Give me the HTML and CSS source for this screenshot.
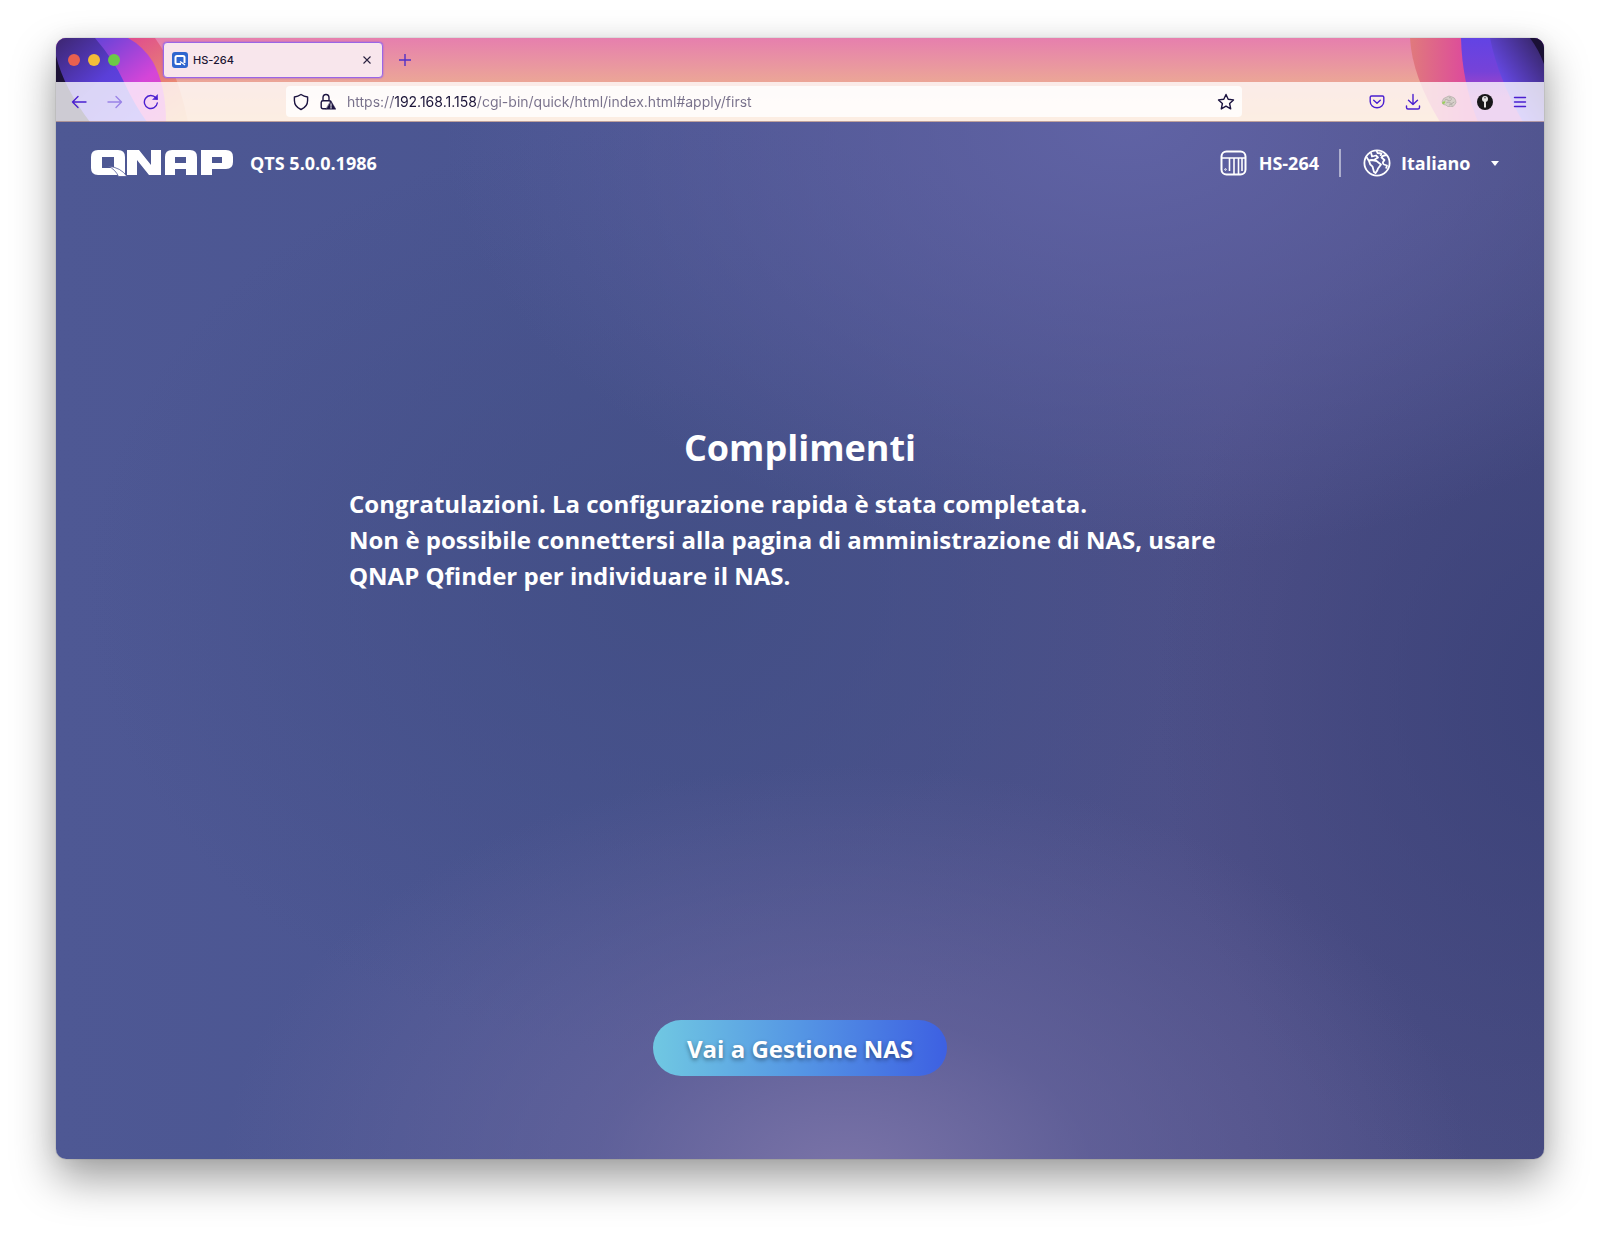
FILE: index.html
```html
<!DOCTYPE html>
<html lang="it">
<head>
<meta charset="utf-8">
<meta name="viewport" content="width=device-width, initial-scale=1">
<title>HS-264</title>
<link rel="stylesheet" href="styles.css">
</head>
<body>
<div class="window">
  <div class="chrome">
    <svg class="theme theme-left" width="134" height="84" viewBox="0 0 134 84" aria-hidden="true">
      <defs>
        <linearGradient id="l1" x1="0" y1="0" x2="1" y2="1"><stop offset="0" stop-color="#3d2670"/><stop offset=".5" stop-color="#5a3fd8"/><stop offset="1" stop-color="#6b4bf0"/></linearGradient>
        <linearGradient id="l2" x1="0" y1="0" x2="1" y2="1"><stop offset=".2" stop-color="#6a43d8"/><stop offset=".65" stop-color="#d545d8"/><stop offset="1" stop-color="#e24fb4"/></linearGradient>
        <linearGradient id="l3" x1="0" y1="0" x2="1" y2="1"><stop offset=".3" stop-color="#e0508c"/><stop offset=".6" stop-color="#e77a78"/><stop offset="1" stop-color="#efa868"/></linearGradient>
      </defs>
      <path d="M0 0H99Q121 30 132 84H0Z" fill="url(#l3)"/>
      <path d="M0 0H72Q87 8 97 24Q110 48 110 84H0Z" fill="url(#l2)"/>
      <path d="M0 0H39Q58 22 68 44T91 84H0Z" fill="url(#l1)"/>
      <path d="M0 18Q8 50 34 84H0Z" fill="#1c1236"/>
    </svg>
    <svg class="theme theme-right" width="150" height="84" viewBox="0 0 150 84" aria-hidden="true">
      <defs>
        <linearGradient id="r1"><stop offset="0" stop-color="#e07a7c"/><stop offset=".42" stop-color="#dd4a9c"/></linearGradient>
        <linearGradient id="r2" x1="0" y1="0" x2="0" y2="1"><stop offset="0" stop-color="#6243e4"/><stop offset=".4" stop-color="#7642d8"/><stop offset=".7" stop-color="#b044c4"/></linearGradient>
        <linearGradient id="r3" x1="0" y1="1" x2="1" y2="0"><stop offset=".3" stop-color="#6a4cf0"/><stop offset=".9" stop-color="#3a2870"/></linearGradient>
      </defs>
      <path d="M16 0Q18 38 46 84H150V0Z" fill="url(#r1)"/>
      <path d="M67 0Q68 44 84 84H150V0Z" fill="url(#r2)"/>
      <path d="M96 0Q104 40 129 84H150V0Z" fill="url(#r3)"/>
      <path d="M136 0Q145 12 150 26V0Z" fill="#1a1034"/>
    </svg>

    <div class="tabstrip">
      <div class="lights"><span class="light red"></span><span class="light yellow"></span><span class="light green"></span></div>
      <div class="tab">
        <svg width="16" height="16" viewBox="0 0 16 16" aria-hidden="true"><rect width="16" height="16" rx="3" fill="#2f66cf"/><path d="M9 12H5Q3.500 12 3.500 10.500V5.500Q3.500 4 5 4H11Q12.500 4 12.500 5.500V11" fill="none" stroke="#fff" stroke-width="2"/><path d="M8 9.500 13 13" stroke="#fff" stroke-width="1.500"/></svg>
        <span class="tab-title">HS-264</span>
        <button class="icon-btn tab-close" aria-label="Chiudi scheda"><svg width="10" height="10" viewBox="0 0 10 10"><path d="M1.500 1.500 8.500 8.500M8.500 1.500 1.500 8.500" stroke="#2a2140" stroke-width="1.100"/></svg></button>
      </div>
      <button class="icon-btn new-tab" aria-label="Nuova scheda"><svg width="14" height="14" viewBox="0 0 14 14"><path d="M7 1V13M1 7H13" stroke="#5030c8" stroke-width="1.400"/></svg></button>
    </div>

    <div class="toolbar">
      <div class="nav">
        <button class="icon-btn" aria-label="Indietro"><svg width="16" height="16" viewBox="0 0 16 16" class="line"><path d="M15 8H1.500M7 2.500 1.500 8 7 13.500"/></svg></button>
        <button class="icon-btn" aria-label="Avanti" disabled><svg width="16" height="16" viewBox="0 0 16 16" class="line"><path d="M1 8H14.500M9 2.500 14.500 8 9 13.500"/></svg></button>
        <button class="icon-btn" aria-label="Ricarica"><svg width="16" height="16" viewBox="0 0 16 16" class="line"><path d="M14.300 9A6.500 6.500 0 1 1 12.800 3.800L14 5"/><path d="M14.500 1V5.500H10Z" fill="#4a1fd0" stroke-width=".600"/></svg></button>
      </div>
      <div class="urlbar">
        <svg width="16" height="18" viewBox="0 0 16 18" class="dark" aria-hidden="true"><path d="M8 1.500Q11 3.600 14.600 4V7.500C14.600 12 12 14.800 8 16.500C4 14.800 1.400 12 1.400 7.500V4Q5 3.600 8 1.500Z"/></svg>
        <svg width="16" height="18" viewBox="0 0 16 18" class="dark" aria-hidden="true"><path d="M6 15.800H3Q1.200 15.800 1.200 14V9.500Q1.200 7.800 3 7.800H9Q10.300 7.800 10.600 8.500M3 7.800V4.800Q3 1.500 6 1.500T9 4.800V7.800"/><path d="M11 8 15.800 16.200H6.200Z" fill="#1c1440" stroke-width=".500"/><path d="M11 10.800V13.300M11 14.200V15.200" stroke="#fff" stroke-width="1"/></svg>
        <input class="url" type="text" aria-label="Indirizzo" value="https://192.168.1.158/cgi-bin/quick/html/index.html#apply/first">
        <button class="icon-btn" aria-label="Aggiungi ai segnalibri"><svg width="18" height="18" viewBox="0 0 18 18" class="dark"><path d="M9 1.500 11.200 6.300 16.500 6.900 12.600 10.500 13.700 15.900 9 13.200 4.300 15.900 5.400 10.500 1.500 6.900 6.800 6.300Z"/></svg></button>
      </div>
      <div class="tools">
        <button class="icon-btn" aria-label="Pocket"><svg width="16" height="16" viewBox="0 0 16 16" class="line"><path d="M2.500 2H13.500Q14.800 2 14.800 3.300V7.500A6.800 6.300 0 0 1 1.200 7.500V3.300Q1.200 2 2.500 2ZM4.700 6.200 8 9.300 11.300 6.200"/></svg></button>
        <button class="icon-btn" aria-label="Download"><svg width="16" height="18" viewBox="0 0 16 18" class="line"><path d="M8 1.500V11.500M3.500 7.200 8 11.600 12.500 7.200M1.500 13V14.500Q1.500 16 3 16H13Q14.500 16 14.500 14.500V13"/></svg></button>
        <button class="icon-btn" aria-label="Estensione"><svg width="16" height="14" viewBox="0 0 18 16"><path d="M1 8Q2 3 6 2.500Q9 0 12 2Q16 3 16.500 6Q18 9 15.500 11Q14 14.500 11 13Q7 14 5.500 11.500Q2 12 1 8Z" fill="#d6d0ca" stroke="#b0aaa6" stroke-width=".800"/><path d="M4 6Q6 4 8 6T12 5M6 9Q8 7 10 9T15 8M9 11.500Q11 10 13 11.500M9 3Q11 3 12 4" fill="none" stroke="#a8a29e" stroke-width=".900"/><path d="M1 9Q2 6.500 5 7.500Q5 10 2 10.500Z" fill="#9bcf5c"/></svg></button>
        <button class="icon-btn" aria-label="Gestore password"><svg width="16" height="16" viewBox="0 0 16 16"><circle cx="8" cy="8" r="8" fill="#17171a"/><circle cx="8" cy="5" r="3" fill="#e4e4e4"/><path d="M7 7H9V13L8 14 7 13Z" fill="#e4e4e4"/><circle cx="8" cy="3.800" r=".700" fill="#17171a"/></svg></button>
        <button class="icon-btn" aria-label="Menu"><svg width="14" height="14" viewBox="0 0 14 14" class="line"><path d="M1.500 2.500H12.500M1.500 7H12.500M1.500 11.500H12.500"/></svg></button>
      </div>
    </div>
  </div>

  <div class="page">
    <header class="header">
      <svg class="logo" width="143" height="28" viewBox="0 0 143 28" role="img" aria-label="QNAP">
        <g fill="#fff" fill-rule="evenodd">
          <path d="M7 1H27Q34 1 34 8V26H7Q0 26 0 19V8Q0 1 7 1ZM11 8V19H23V8Z"/>
          <path d="M17 17Q30 18.500 36 27.500H27.500Q24.500 20.500 17 17Z" stroke="#4f5896" stroke-width=".800"/>
          <path d="M36 1H48L60 16V1H70V26H58L46 11V26H36Z"/>
          <path d="M81 1H99Q106 1 106 8V26H95V20H84V26H74V8Q74 1 81 1ZM84 8V14H95V8Z"/>
          <path d="M110 1H135Q142 1 142 8V13Q142 20 135 20H121V26H110ZM121 8V14H131V8Z"/>
        </g>
      </svg>
      <span class="version">QTS 5.0.0.1986</span>
      <div class="device">
        <svg width="27" height="26" viewBox="0 0 27 26" fill="none" stroke="#fff" stroke-width="2" aria-hidden="true"><rect x="1.500" y="1.500" width="24" height="23" rx="5"/><path d="M2 8H25M9.500 8V21M14 8V24M18.500 8V24M22 8V21" stroke-width="1.600"/><circle cx="5.500" cy="19.500" r=".800" stroke-width="1"/></svg>
        <span>HS-264</span>
      </div>
      <label class="language">
        <svg width="28" height="28" viewBox="0 0 28 28" fill="none" stroke="#fff" stroke-width="1.800" stroke-linejoin="round" aria-hidden="true"><circle cx="14" cy="14" r="12.600"/><path d="M3.500 8 6 12Q6.500 15.500 9.500 17.500L11 23 12.500 24Q14.500 22 15 19.500L18 15.500 13.500 12 9 11Q6.500 11 6 12M8 3.500 9 7.500 13 6.500 15 8.500 11 11M13.500 1.500 14.500 4 18.500 4.500 17.500 7M24 6.500Q20 5.500 18.500 8.500L21.500 11Q18.500 14 21 15.500L24 16.500 23 19.500"/></svg>
        <select class="lang-select" aria-label="Lingua"><option>Italiano</option></select>
        <svg width="8" height="5" viewBox="0 0 8 5" aria-hidden="true"><path d="M0 0H8L4 5Z" fill="#fff"/></svg>
      </label>
    </header>
    <main class="main">
      <h1 class="title">Complimenti</h1>
      <p class="message">Congratulazioni. La configurazione rapida è stata completata.<br>Non è possibile connettersi alla pagina di amministrazione di NAS, usare QNAP Qfinder per individuare il NAS.</p>
      <button class="cta">Vai a Gestione NAS</button>
    </main>
  </div>
</div>
</body>
</html>
```
FILE: styles.css
```css
* { box-sizing: border-box; }

body {
  margin: 0;
  min-height: 100vh;
  padding: 38px 56px 74px;
  display: flex;
  background: #fff;
  font-family: "Open Sans", sans-serif;
}

button {
  border: 0;
  padding: 0;
  background: none;
  font: inherit;
}

svg { display: block; flex: none; }

.window {
  flex: 1;
  min-width: 0;
  display: flex;
  flex-direction: column;
  border-radius: 10px;
  overflow: hidden;
  box-shadow: 0 0 1px rgba(0, 0, 0, .6), 0 20px 44px rgba(0, 0, 0, .38), 0 0 20px rgba(0, 0, 0, .06);
}

/* Browser chrome */
.chrome {
  position: relative;
  font-family: Inter, sans-serif;
  background: linear-gradient(#e67fae, #eba498 50%, #f3b27c);
}

.theme { position: absolute; top: 0; }
.theme-left { left: 0; }
.theme-right { right: 0; }

.tabstrip {
  position: relative;
  height: 44px;
  padding-left: 12px;
  display: flex;
  align-items: center;
}

.lights { display: flex; gap: 8px; margin-right: 43px; }
.light { width: 12px; height: 12px; border-radius: 50%; }
.red { background: #e9604f; }
.yellow { background: #f3bd38; }
.green { background: #6dc845; }

.tab {
  width: 220px;
  height: 36px;
  padding: 0 10px 0 8px;
  display: flex;
  align-items: center;
  gap: 5px;
  border: 1px solid #9a66e6;
  border-radius: 4px;
  background: #f8e6ec;
  box-shadow: 0 0 2px #8a58e8;
}

.tab-title { flex: 1; font-size: 11px; font-weight: 500; color: #1c1533; }
.new-tab { margin-left: 15px; }
.icon-btn { display: flex; align-items: center; justify-content: center; }
.icon-btn:disabled { opacity: .45; }

.toolbar {
  position: relative;
  height: 40px;
  padding: 0 17px 0 15px;
  display: flex;
  align-items: center;
  background: rgba(255, 255, 255, .78);
  border-bottom: 1px solid rgba(150, 110, 110, .6);
}

.nav { display: flex; gap: 20px; margin-right: 127px; }

.urlbar {
  flex: 1;
  min-width: 0;
  height: 31px;
  padding: 0 7px;
  display: flex;
  align-items: center;
  gap: 11px;
  border-radius: 4px;
  background: rgba(255, 255, 255, .8);
}

.url {
  flex: 1;
  min-width: 0;
  border: 0;
  padding: 0;
  outline: 0;
  font: 14px/20px Inter, sans-serif;
  color: transparent;
  background: linear-gradient(90deg, #77708a 46px, #1b1438 46px, #1b1438 130px, #77708a 130px);
  background-clip: text;
}

.tools { display: flex; align-items: center; gap: 20px; margin-left: 127px; }

.line { fill: none; stroke: #4a1fd0; stroke-width: 1.4; stroke-linecap: round; stroke-linejoin: round; }
.dark { fill: none; stroke: #1c1440; stroke-width: 1.4; stroke-linecap: round; stroke-linejoin: round; }

/* Setup page */
.page {
  flex: 1;
  display: flex;
  flex-direction: column;
  color: #fff;
  background:
    radial-gradient(ellipse 42% 40% at 53% 102%, #7b74a8, rgba(108, 104, 160, .6) 40%, rgba(86, 88, 148, 0)),
    radial-gradient(ellipse 46% 42% at 72% 0%, rgba(98, 101, 168, .9), rgba(84, 90, 156, 0)),
    radial-gradient(ellipse 28% 50% at 102% 55%, rgba(58, 65, 120, .9), rgba(66, 72, 128, 0)),
    radial-gradient(ellipse 40% 45% at 42% 45%, rgba(66, 78, 133, .9), rgba(70, 80, 140, 0)),
    linear-gradient(90deg, #4e5894, #4a5591 35%, #4d4f87 80%, #484c82);
}

.header {
  display: flex;
  align-items: center;
  padding: 27px 45px 0 35px;
  font-size: 18px;
  line-height: 28px;
  font-weight: 700;
}

.version { margin-left: 16px; }
.device { display: flex; align-items: center; gap: 12px; margin-left: auto; }

.language {
  display: flex;
  align-items: center;
  gap: 10px;
  margin-left: 20px;
  padding-left: 22px;
  border-left: 2px solid rgba(255, 255, 255, .5);
}

.lang-select {
  appearance: none;
  width: 80px;
  border: 0;
  padding: 0;
  background: none;
  color: #fff;
  font: inherit;
}

.main {
  flex: 1;
  width: 100%;
  max-width: 902px;
  margin: 0 auto;
  padding: 245px 0 83px;
  display: flex;
  flex-direction: column;
}

.title { margin: 0; text-align: center; font-size: 36px; line-height: 52px; font-weight: 700; }
.message { margin: 12px 0 40px; font-size: 24px; line-height: 36px; font-weight: 700; }

.cta {
  align-self: center;
  margin-top: auto;
  height: 56px;
  padding: 0 34px;
  border-radius: 28px;
  background: linear-gradient(90deg, #70c8e2, #5596e4 50%, #3d60e2);
  color: #fff;
  font-size: 24px;
  font-weight: 700;
  text-shadow: 0 2px 4px rgba(0, 0, 0, .4);
}
```
